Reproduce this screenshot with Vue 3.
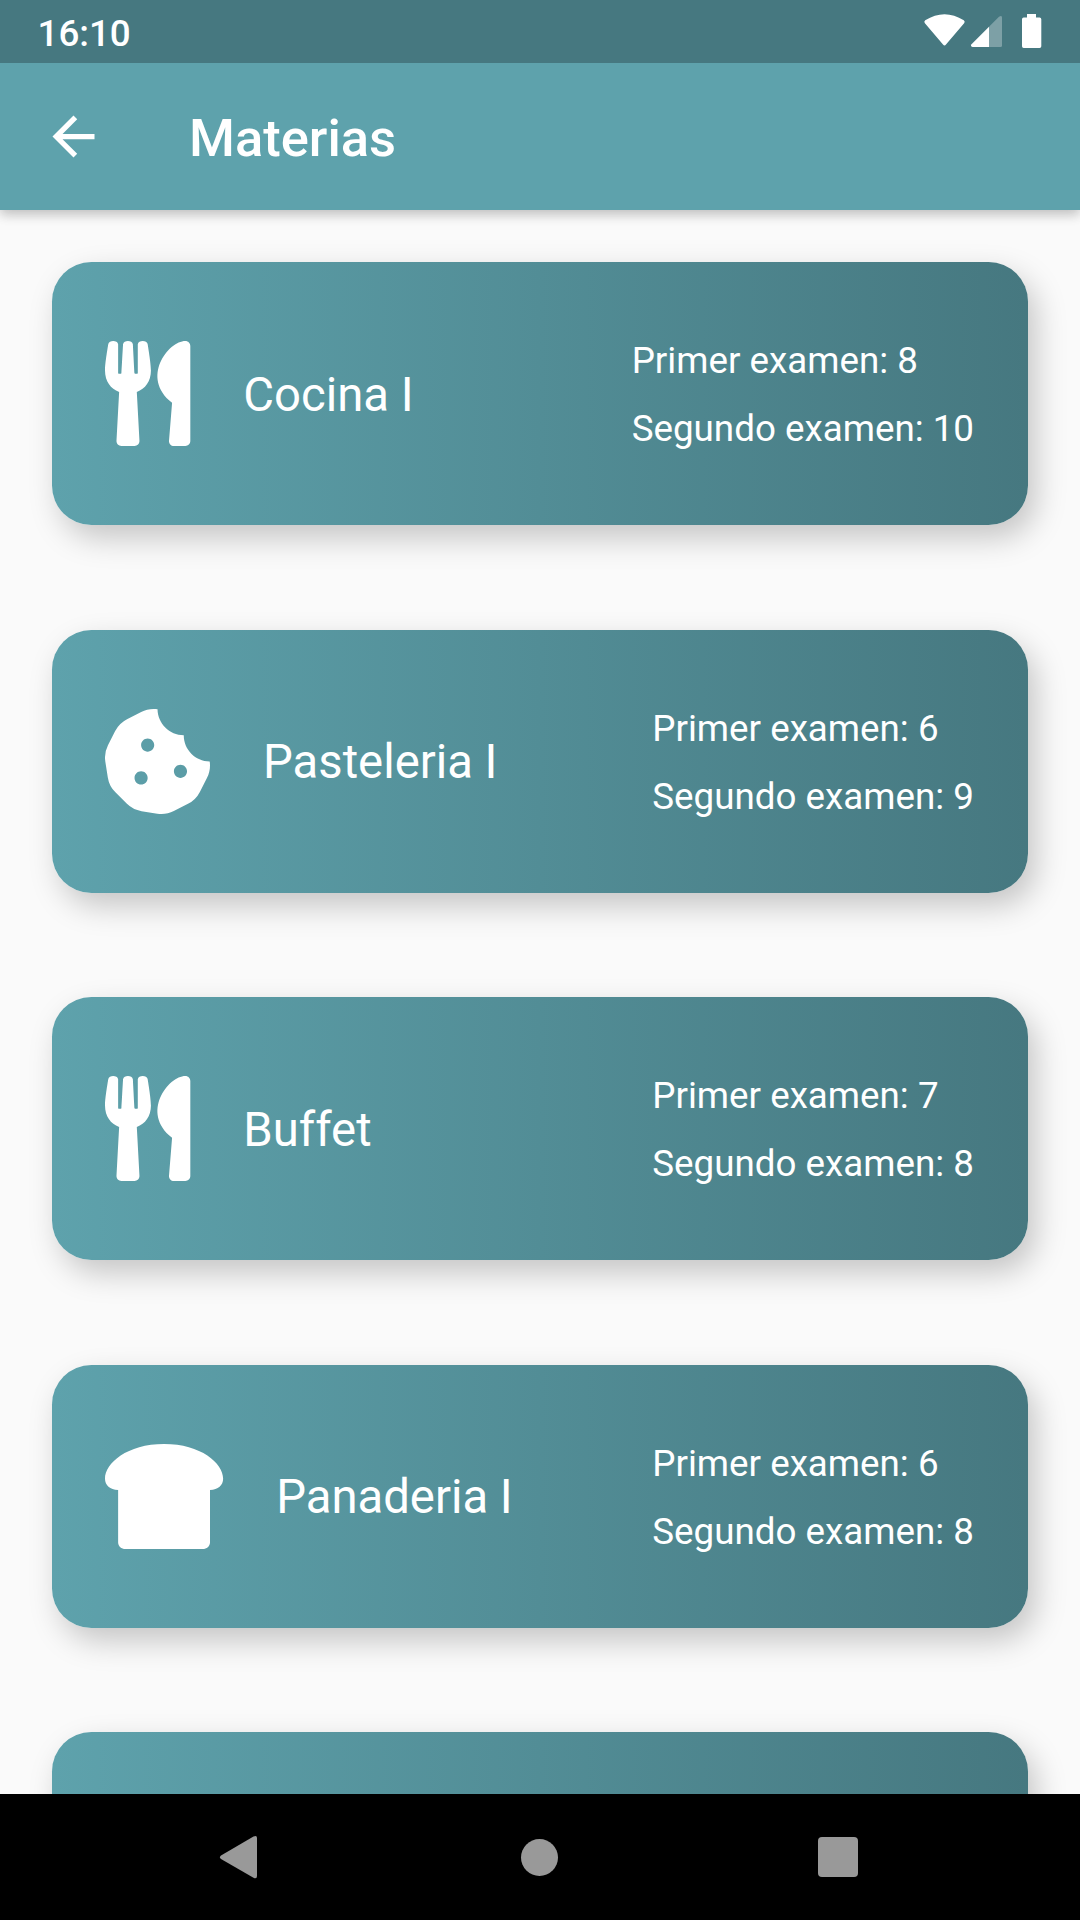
<script setup>
const icons = {
  utensils: {
    width: 416,
    path: 'M207.9 15.2c.8 4.7 16.1 94.5 16.1 128.8 0 52.3-27.8 89.6-68.9 104.6L168 486.7c.7 13.7-10.2 25.3-24 25.3H80c-13.7 0-24.7-11.5-24-25.3l12.9-238.1C27.7 233.6 0 196.2 0 144 0 109.6 15.3 19.9 16.1 15.2 19.3-5.1 61.4-5.4 64 16.3v141.2c1.3 3.4 15.1 3.2 16 0 1.4-25.3 7.9-139.2 8-141.8 3.3-20.8 44.7-20.8 47.9 0 .2 2.7 6.6 116.5 8 141.8.9 3.2 14.8 3.4 16 0V16.3c2.6-21.6 44.8-21.4 48-1.1zm119.2 285.7l-15 185.1c-1.2 14 9.9 26 23.9 26h56c13.3 0 24-10.7 24-24V24c0-13.2-10.7-24-24-24-82.5 0-221.4 178.5-64.9 300.9z',
  },
  cookie: {
    width: 512,
    path: 'M510.52 255.82c-69.97-.85-126.47-57.69-126.47-127.86-70.17 0-127-56.49-127.86-126.45-27.26-4.14-55.13.3-79.72 12.82l-69.13 35.22a132.221 132.221 0 0 0-57.79 57.81l-35.1 68.88a132.645 132.645 0 0 0-12.82 80.95l12.08 76.27a132.521 132.521 0 0 0 37.16 72.96l54.77 54.76a132.036 132.036 0 0 0 72.71 37.06l76.71 12.15c27.51 4.36 55.7-.11 80.53-12.76l69.13-35.21a132.273 132.273 0 0 0 57.79-57.81l35.1-68.88c12.56-24.64 17.01-52.58 12.91-79.91zM176 368c-17.67 0-32-14.33-32-32s14.33-32 32-32 32 14.33 32 32-14.33 32-32 32zm32-160c-17.67 0-32-14.33-32-32s14.33-32 32-32 32 14.33 32 32-14.33 32-32 32zm160 128c-17.67 0-32-14.33-32-32s14.33-32 32-32 32 14.33 32 32-14.33 32-32 32z',
  },
  bread: {
    width: 576,
    path: 'M288 0C108 0 0 93.4 0 169.14 0 199.44 24.24 224 64 224v256c0 17.67 16.12 32 36 32h376c19.88 0 36-14.33 36-32V224c39.76 0 64-24.56 64-54.86C576 93.4 468 0 288 0z',
  },
}

const subjects = [
  { name: 'Cocina I', icon: icons.utensils, first: 8, second: 10 },
  { name: 'Pasteleria I', icon: icons.cookie, first: 6, second: 9 },
  { name: 'Buffet', icon: icons.utensils, first: 7, second: 8 },
  { name: 'Panaderia I', icon: icons.bread, first: 6, second: 8 },
]
</script>

<template>
  <div class="screen">
    <header class="status-bar">
      <span class="clock">16:10</span>
      <svg width="120" height="63" viewBox="0 0 120 63" fill="#fff">
        <path d="M4.9 23.2Q3.5 21.6 5.2 20.3Q24.500 8 43.800 20.3Q45.500 21.600 44.100 23.200L26 44.600Q24.500 46.300 23 44.600Z" />
        <path d="M69 26.700V47H52.500Q50 46.500 51.500 44.300Z" />
        <path d="M69 26.700L79 16.800Q82 14.700 82 17.500V45.500Q82 47 80.500 47H69Z" opacity=".3" />
        <path d="M107 14h9v3.500h3.600q1.700 0 1.700 1.700v27q0 1.700-1.700 1.700h-15.900q-1.700 0-1.700-1.700v-27q0-1.700 1.700-1.700h3.300z" />
      </svg>
    </header>

    <div class="app-bar">
      <svg class="back" viewBox="0 0 24 24" fill="#fff">
        <path d="M20 11H7.830l5.590-5.590L12 4l-8 8 8 8 1.410-1.410L7.830 13H20v-2z" />
      </svg>
      <h1 class="heading">Materias</h1>
    </div>

    <main class="list">
      <section v-for="s in subjects" :key="s.name" class="card">
        <svg class="icon" :viewBox="`0 0 ${s.icon.width} 512`" :style="{ width: (s.icon.width * 105) / 512 + 'px' }" fill="#fff">
          <path :d="s.icon.path" />
        </svg>
        <span class="name">{{ s.name }}</span>
        <div class="exams">
          <span>Primer examen: {{ s.first }}</span>
          <span>Segundo examen: {{ s.second }}</span>
        </div>
      </section>
      <section class="card"></section>
    </main>

    <nav class="nav-bar">
      <div class="nav-item">
        <svg width="43" height="45" viewBox="0 0 43 45" fill="#999">
          <path d="M1 20.500L33.500 1.600Q37 0 37 3V41Q37 44.300 33.500 42.700L1 24Q-1 22.200 1 20.500Z" />
        </svg>
      </div>
      <div class="nav-item"><span class="home"></span></div>
      <div class="nav-item"><span class="recent"></span></div>
    </nav>
  </div>
</template>

<style>
body {
  margin: 0;
}
</style>

<style scoped>
.screen {
  display: flex;
  flex-direction: column;
  width: 1080px;
  height: 1920px;
  overflow: hidden;
  background: #fafafa;
  color: #fff;
  font-family: Roboto, sans-serif;
}
svg {
  overflow: visible;
}
.status-bar {
  display: flex;
  flex: none;
  align-items: center;
  justify-content: space-between;
  position: relative;
  z-index: 2;
  box-sizing: border-box;
  height: 63px;
  padding-left: 37.5px;
  padding-right: 40px;
  background: #467880;
}
.clock {
  padding-top: 3px;
  font-size: 36.75px;
  font-weight: 500;
  line-height: 43px;
}
.app-bar {
  display: flex;
  flex: none;
  align-items: center;
  position: relative;
  z-index: 1;
  height: 147px;
  padding-left: 42px;
  background: #5ea2ac;
  box-shadow: 0 5px 10px rgba(0, 0, 0, 0.14), 0 3px 14px rgba(0, 0, 0, 0.12);
}
.back {
  width: 63px;
  height: 63px;
}
.heading {
  margin: 0 0 0 84px;
  padding-top: 2px;
  font-size: 52.5px;
  font-weight: 500;
  line-height: 62px;
}
.list {
  display: flex;
  flex: 1;
  flex-direction: column;
  gap: 104.5px;
  min-height: 0;
  padding: 52px 52px 0;
  overflow: hidden;
}
.card {
  display: flex;
  flex: none;
  align-items: center;
  box-sizing: border-box;
  height: 263px;
  padding: 0 54px 0 53px;
  border-radius: 39.4px;
  background: linear-gradient(to right, #5ea2ac, #467880);
  box-shadow: 8px 13px 31px rgba(0, 0, 0, 0.21);
}
.icon {
  flex: none;
  height: 105px;
}
.name {
  margin-left: 53px;
  padding-top: 3px;
  font-size: 47.25px;
  line-height: 55px;
}
.exams {
  display: flex;
  flex-direction: column;
  gap: 25px;
  margin-left: auto;
  padding-top: 2px;
  font-size: 36.75px;
  line-height: 43px;
}
.nav-bar {
  display: flex;
  flex: none;
  height: 126px;
  padding-left: 92px;
  background: #000;
}
.nav-item {
  display: flex;
  flex: none;
  align-items: center;
  justify-content: center;
  width: 298.5px;
}
.home {
  width: 37px;
  height: 37px;
  border-radius: 50%;
  background: #999;
}
.recent {
  width: 40px;
  height: 40px;
  border-radius: 4px;
  background: #999;
}
</style>
